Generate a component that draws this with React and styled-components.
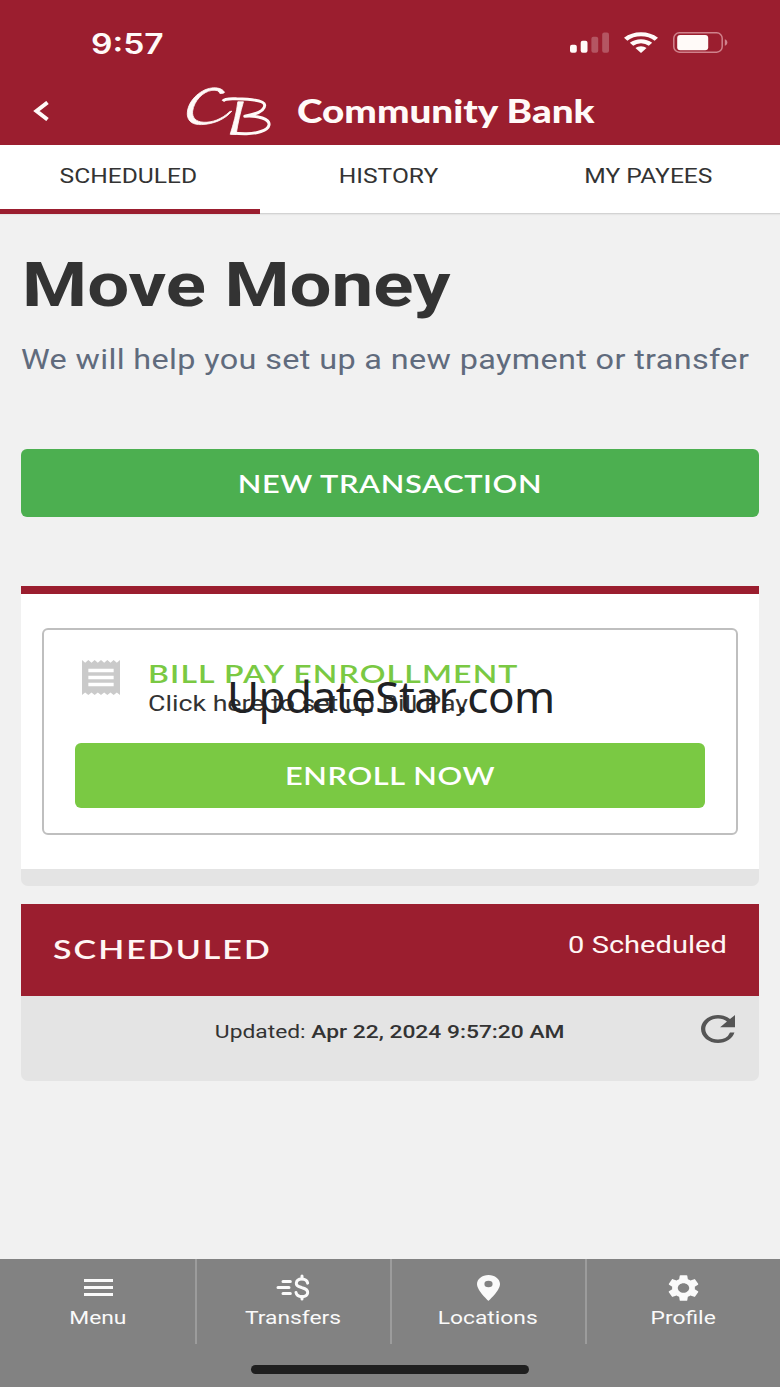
import React from "react"
import styled, { createGlobalStyle } from "styled-components"

const GlobalStyle = createGlobalStyle`
  * {
    box-sizing: border-box;
  }

  body {
    margin: 0;
    background: #f1f1f1;
    color: #333;
    font-family: Roboto, "Liberation Sans", sans-serif;
  }

  h1, h2, h3, p {
    margin: 0;
    font-weight: 400;
  }

  button {
    padding: 0;
    border: 0;
    background: none;
    color: inherit;
    font: inherit;
  }

  svg {
    display: block;
    flex: none;
  }
`

// the whole type scale is set wide
const Wide = styled.span`
  display: inline-block;
  white-space: nowrap;
  transform: scaleX(${p => p.$x || 1.2});
  transform-origin: ${p => p.$from || "center"} center;
`

const Screen = styled.div`
  position: relative;
  display: flex;
  flex-direction: column;
  width: 780px;
  height: 1387px;
  overflow: hidden;
  background: #f1f1f1;
`

const Header = styled.header`
  height: 145px;
  background: #9b1e2f;
  color: #fffaf8;
`

const StatusBar = styled.div`
  display: flex;
  align-items: center;
  justify-content: space-between;
  height: 77px;
  padding: 9px 52px 0 91px;
`

const Time = styled.div`
  padding-top: 1px;
  font: 600 28px/30px Inter, sans-serif;
`

const StatusIcons = styled.div`
  display: flex;
  align-items: center;
  gap: 15px;
  padding-bottom: 2px;
`

const BrandBar = styled.div`
  display: flex;
  align-items: center;
  height: 68px;
  padding-left: 33px;
`

const BackButton = styled.button`
  margin-right: 134px;
`

const BrandName = styled.div`
  margin-left: 24px;
  padding-bottom: 2px;
  font: 900 33px/40px Lato, sans-serif;
`

const Tabs = styled.nav`
  display: grid;
  grid-template-columns: repeat(3, 1fr);
  height: 69px;
  background: #fff;
  border-bottom: 1px solid #d3d3d3;
  box-shadow: 0 1px 1px #e6e6e6;
`

const Tab = styled.button`
  height: 69px;
  padding: 0 3px 3px 0;
  border-bottom: 5px solid ${p => (p.$active ? "#9b1e2f" : "transparent")};
  font-size: 20.5px;
  line-height: 24px;
`

const Content = styled.main`
  flex: 1;
  padding: 35px 21px 0;
`

const Title = styled.h1`
  padding-left: 1px;
  font-size: 62px;
  font-weight: 700;
  line-height: 72px;
`

const Subtitle = styled.p`
  margin-top: 23px;
  color: #606b7d;
  font-size: 27px;
  line-height: 32px;
  letter-spacing: 0.3px;
`

const ActionButton = styled.button`
  display: flex;
  align-items: center;
  justify-content: center;
  width: 100%;
  height: ${p => p.$height}px;
  padding-top: 1px;
  border-radius: 6px;
  background: ${p => p.$color};
  color: #fff;
  font: 600 24px/28px Lato, sans-serif;
  letter-spacing: 0.5px;
`

const NewTransaction = styled(ActionButton)`
  margin-top: 73px;
`

const Panel = styled.section`
  margin-top: 69px;
  height: 300px;
  padding: 34px 21px 0;
  border-top: 8px solid #9b1e2f;
  border-bottom: 17px solid #e4e4e4;
  border-radius: 0 0 7px 7px;
  background: #fff;
`

const Enrollment = styled.div`
  height: 207px;
  padding: 30px 31px 0;
  border: 2px solid #bfbfbf;
  border-radius: 6px;
`

const EnrollmentHead = styled.div`
  display: flex;
  height: 83px;
  padding-left: 7px;
`

const EnrollmentText = styled.div`
  padding-left: 28px;
`

const EnrollmentTitle = styled.h2`
  color: #7ac943;
  font: 600 25px/26px Lato, sans-serif;
  letter-spacing: 0.9px;
`

const EnrollmentNote = styled.p`
  margin-top: 4px;
  font-size: 22.3px;
  line-height: 26px;
`

const Scheduled = styled.section`
  margin-top: 18px;
`

const ScheduledHead = styled.div`
  display: flex;
  align-items: center;
  justify-content: space-between;
  height: 92px;
  padding: 0 32px;
  background: #9b1e2f;
  color: #fff6f4;
`

const ScheduledTitle = styled.h3`
  padding-bottom: 3px;
  font: 600 26.5px/30px Lato, sans-serif;
  letter-spacing: 1.6px;
`

const ScheduledCount = styled.div`
  padding-bottom: 11px;
  font-size: 24.5px;
  line-height: 30px;
`

const ScheduledFoot = styled.div`
  display: grid;
  grid-template-columns: 1fr auto 1fr;
  justify-items: end;
  align-items: start;
  height: 85px;
  padding: 19px 24px 0;
  border-radius: 0 0 7px 7px;
  background: #e4e4e4;
`

const Updated = styled.p`
  grid-column: 2;
  padding-top: 5px;
  font-size: 19px;
  line-height: 24px;

  b {
    font-weight: 500;
  }
`

const Footer = styled.footer`
  display: flex;
  flex-direction: column;
  align-items: center;
  height: 128px;
  background: #828282;
  color: #fafafa;
`

const NavGrid = styled.nav`
  display: grid;
  grid-template-columns: repeat(4, 1fr);
  width: 100%;
  height: 85px;
`

const NavItem = styled.button`
  display: flex;
  flex-direction: column;
  align-items: center;
  padding: 15px 0 0 1px;
  font-size: 19px;
  line-height: 24px;

  & + & {
    box-shadow: inset 2px 0 #9c9c9c;
  }
`

const NavIcon = styled.span`
  display: flex;
  align-items: center;
  height: 27px;
  margin-bottom: 5px;
`

const HomeBar = styled.div`
  width: 278px;
  height: 9px;
  margin-top: 21px;
  border-radius: 5px;
  background: #1f1f1f;
`

const Watermark = styled.div`
  position: absolute;
  top: 666px;
  left: 227px;
  color: #202124;
  font: 400 44px/60px "Noto Sans", sans-serif;
  font-kerning: none;
  letter-spacing: -0.55px;
`

const Icon = ({ w, h, box, children }) => (
  <svg width={w} height={h} viewBox={box} preserveAspectRatio="none" fill="currentColor">
    {children}
  </svg>
)

const SignalIcon = () => (
  <Icon w={39} h={21} box="0 0 39 21">
    <rect x="0" y="12.7" width="6.8" height="8" rx="2" />
    <rect x="10.7" y="8.8" width="6.8" height="12" rx="2" />
    <g opacity="0.25">
      <rect x="21.4" y="4.8" width="6.8" height="16" rx="2" />
      <rect x="32.2" y="0.4" width="6.8" height="20.4" rx="2" />
    </g>
  </Icon>
)

const WifiIcon = () => (
  <Icon w={34} h={21} box="0 0 28 21">
    <g fill="none" stroke="currentColor" strokeWidth="4.1">
      <path d="M1.38 7.17a18.5 18.5 0 0 1 25.24 0" />
      <path d="M6.19 12.33a11.45 11.45 0 0 1 15.62 0" />
    </g>
    <path d="M14 20.9L9.4 16a6.6 6.6 0 0 1 9.2 0z" />
  </Icon>
)

const BatteryIcon = () => (
  <Icon w={55} h={21} box="0 0 55 21">
    <rect x="0.8" y="0.8" width="48.4" height="19.4" rx="5.5" fill="none" stroke="#d0828c" strokeWidth="1.5" />
    <rect x="4.2" y="3" width="31" height="15.2" rx="3" />
    <path d="M51.8 7.3c3.4 1 3.4 5.4 0 6.4z" fill="#d0828c" />
  </Icon>
)

const LogoMark = () => (
  <Icon w={88} h={52} box="555 255 265 155">
    <g stroke="currentColor" strokeWidth="2.5" strokeLinejoin="round">
      <path d="M674 277C668 265 650 262 635 264C600 268 560 305 562 344C564 365 580 374 605 373C640 372 675 358 696 333L690 334C665 358 635 367 612 366C585 365 576 350 578 333C582 303 608 275 636 271C650 269 658 273 660 280C666 281 671 280 674 277Z" />
      <path
        d="M669 303C674 295 690 295 710 296C755 297 794 301 795 315C795 333 765 343 735 348C775 345 811 357 808 374C805 391 770 401 735 400C718 400 706 399 694 398"
        fill="none"
        strokeWidth="9"
      />
      <path d="M714 305L731 305C722 335 714 370 709 402L691 402C700 375 711 335 714 305Z" />
    </g>
  </Icon>
)

const navItems = [
  {
    label: "Menu",
    icon: (
      <Icon w={29} h={17} box="0 0 29 17">
        <path d="M0 0h29v3H0zM0 7h29v3H0zM0 14h29v3H0z" />
      </Icon>
    ),
  },
  {
    label: "Transfers",
    icon: (
      <Icon w={34} h={27} box="830 74 102 80">
        <g fill="none" stroke="currentColor" strokeWidth="9" strokeLinecap="round">
          <path d="M851 96h22M836 114h33M851 132h22" />
          <path d="M925 101C922 85 893 84 891 101C890 111 900 112 908 114.500C919 117 926 121 925 130C923 145 893 145 890 129" />
          <path d="M908 80v8M908 141v7" />
        </g>
      </Icon>
    ),
  },
  {
    label: "Locations",
    icon: (
      <Icon w={23} h={26} box="5 2 14 20">
        <path d="M12 2C8.130 2 5 5.130 5 9c0 5.250 7 13 7 13s7-7.750 7-13c0-3.870-3.130-7-7-7zm0 9.500a2.500 2.500 0 0 1 0-5 2.500 2.500 0 0 1 0 5z" />
      </Icon>
    ),
  },
  {
    label: "Profile",
    icon: (
      <Icon w={31} h={26} box="2.2 2.2 19.6 19.6">
        <path d="M19.14 12.94c.04-.3.06-.61.06-.94 0-.32-.02-.64-.07-.94l2.030-1.580a.49.49 0 0 0 .12-.61l-1.920-3.320a.488.488 0 0 0-.59-.22l-2.390.96c-.5-.38-1.030-.7-1.620-.94l-.36-2.540a.484.484 0 0 0-.48-.41h-3.840c-.24 0-.43.17-.47.41l-.36 2.540c-.59.24-1.130.57-1.620.94l-2.390-.96c-.22-.08-.47 0-.59.22L2.740 8.870c-.12.21-.08.47.12.61l2.030 1.580c-.05.3-.09.63-.09.94s.02.64.07.94l-2.030 1.580a.49.49 0 0 0-.12.61l1.920 3.320c.12.22.37.29.59.22l2.390-.96c.5.38 1.030.7 1.620.94l.36 2.540c.05.24.24.41.48.41h3.840c.24 0 .44-.17.47-.41l.36-2.540c.59-.24 1.130-.56 1.620-.94l2.390.96c.22.08.47 0 .59-.22l1.920-3.320c.12-.22.07-.47-.12-.61l-2.010-1.580zM12 15.600c-1.980 0-3.600-1.620-3.600-3.600s1.620-3.600 3.600-3.600 3.600 1.620 3.600 3.600-1.620 3.600-3.600 3.600z" />
      </Icon>
    ),
  },
]

const tabs = ["SCHEDULED", "HISTORY", "MY PAYEES"]

export default function App() {
  return (
    <Screen>
      <GlobalStyle />
      <Header>
        <StatusBar>
          <Time>
            <Wide $from="left">9:57</Wide>
          </Time>
          <StatusIcons>
            <SignalIcon />
            <WifiIcon />
            <BatteryIcon />
          </StatusIcons>
        </StatusBar>
        <BrandBar>
          <BackButton aria-label="Back">
            <Icon w={18} h={20} box="0 0 18 20">
              <path d="M14.500 1.500L3.500 10l11 8.500" fill="none" stroke="currentColor" strokeWidth="4" />
            </Icon>
          </BackButton>
          <LogoMark />
          <BrandName>
            <Wide $x={1.17} $from="left">
              Community Bank
            </Wide>
          </BrandName>
        </BrandBar>
      </Header>

      <Tabs>
        {tabs.map((tab, i) => (
          <Tab key={tab} $active={i === 0}>
            <Wide>{tab}</Wide>
          </Tab>
        ))}
      </Tabs>

      <Content>
        <Title>
          <Wide $from="left">Move Money</Wide>
        </Title>
        <Subtitle>
          <Wide $from="left">We will help you set up a new payment or transfer</Wide>
        </Subtitle>
        <NewTransaction $height={68} $color="#4caf50">
          <Wide $x={1.28}>NEW TRANSACTION</Wide>
        </NewTransaction>

        <Panel>
          <Enrollment>
            <EnrollmentHead>
              <Icon w={38} h={35} box="3 2 18 20">
                <path
                  fill="#cacaca"
                  d="M18 17H6v-2h12v2zm0-4H6v-2h12v2zm0-4H6V7h12v2zM3 22l1.500-1.500L6 22l1.500-1.500L9 22l1.500-1.500L12 22l1.500-1.500L15 22l1.500-1.500L18 22l1.500-1.500L21 22V2l-1.500 1.500L18 2l-1.500 1.500L15 2l-1.500 1.500L12 2l-1.500 1.500L9 2 7.500 3.500 6 2 4.500 3.500 3 2v20z"
                />
              </Icon>
              <EnrollmentText>
                <EnrollmentTitle>
                  <Wide $x={1.28} $from="left">
                    BILL PAY ENROLLMENT
                  </Wide>
                </EnrollmentTitle>
                <EnrollmentNote>
                  <Wide $from="left">Click here to set up Bill Pay</Wide>
                </EnrollmentNote>
              </EnrollmentText>
            </EnrollmentHead>
            <ActionButton $height={65} $color="#7ac943">
              <Wide $x={1.28}>ENROLL NOW</Wide>
            </ActionButton>
          </Enrollment>
        </Panel>

        <Scheduled>
          <ScheduledHead>
            <ScheduledTitle>
              <Wide $x={1.28} $from="left">
                SCHEDULED
              </Wide>
            </ScheduledTitle>
            <ScheduledCount>
              <Wide $x={1.186} $from="right">
                0 Scheduled
              </Wide>
            </ScheduledCount>
          </ScheduledHead>
          <ScheduledFoot>
            <Updated>
              <Wide>
                Updated: <b>Apr 22, 2024 9:57:20 AM</b>
              </Wide>
            </Updated>
            <Icon w={34} h={28} box="4 4 16 16">
              <path
                fill="#555"
                d="M17.650 6.350A7.958 7.958 0 0 0 12 4c-4.420 0-7.990 3.580-7.990 8s3.570 8 7.990 8c3.730 0 6.840-2.550 7.730-6h-2.080A5.990 5.990 0 0 1 12 18c-3.310 0-6-2.690-6-6s2.690-6 6-6c1.660 0 3.140.69 4.220 1.780L13 11h7V4l-2.350 2.350z"
              />
            </Icon>
          </ScheduledFoot>
        </Scheduled>
      </Content>

      <Footer>
        <NavGrid>
          {navItems.map(item => (
            <NavItem key={item.label}>
              <NavIcon>{item.icon}</NavIcon>
              <Wide>{item.label}</Wide>
            </NavItem>
          ))}
        </NavGrid>
        <HomeBar />
      </Footer>

      <Watermark>UpdateStar.com</Watermark>
    </Screen>
  )
}
